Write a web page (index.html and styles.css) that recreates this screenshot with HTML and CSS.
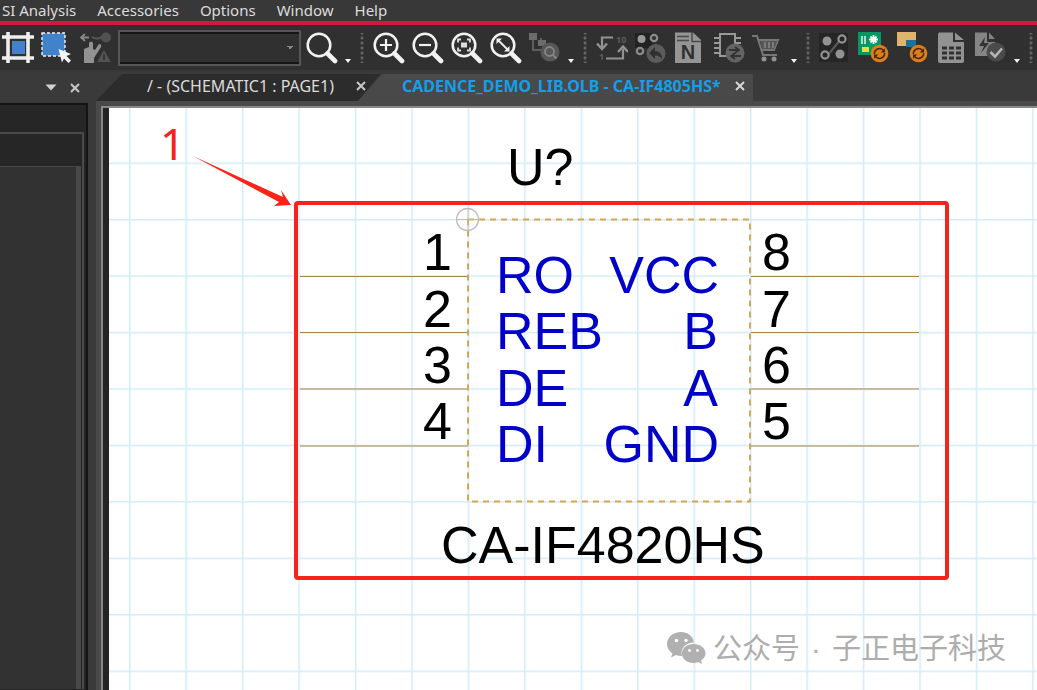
FILE: index.html
```html
<!DOCTYPE html>
<html lang="en">
<head>
<meta charset="utf-8">
<title>CADENCE_DEMO_LIB.OLB - CA-IF4805HS</title>
<link rel="stylesheet" href="styles.css">
</head>
<body>
<svg class="defs" width="0" height="0" aria-hidden="true">
  <defs>
    <symbol id="lens" viewBox="0 0 32 32">
      <circle cx="13" cy="13" r="11.3" fill="none" stroke="#f2f2f2" stroke-width="2.5"/>
      <path d="M21.5 21.5 L29 29" stroke="#f2f2f2" stroke-width="4.6" stroke-linecap="round"/>
    </symbol>
    <symbol id="refresh" viewBox="0 0 20 20">
      <circle cx="10" cy="10" r="9.3" fill="#dd7d1c"/>
      <path d="M4.6 10.5 A5.5 5.5 0 0 1 14 6.5 M15.4 9.5 A5.5 5.5 0 0 1 6 13.5" fill="none" stroke="#46280c" stroke-width="1.6"/>
      <path d="M15.8 4.5 V9 H11.3 Z M4.2 15.5 V11 H8.7 Z" fill="#46280c"/>
    </symbol>
  </defs>
</svg>
<div class="app">
  <nav class="menubar" aria-label="Main menu">
    <button class="menu">SI Analysis</button>
    <button class="menu">Accessories</button>
    <button class="menu">Options</button>
    <button class="menu">Window</button>
    <button class="menu">Help</button>
  </nav>

  <div class="toolbar" role="toolbar">
    <button class="tool" aria-label="Fit frame"><svg viewBox="0 0 32 32"><path d="M6 0 V31 M26 0 V31 M0 5 H32 M0 26 H32" stroke="#eeeeee" stroke-width="3.6"/><rect x="10" y="9" width="13" height="13" fill="#4182cb"/></svg></button>
    <button class="tool" aria-label="Select area"><svg viewBox="0 0 32 32"><rect x="1" y="1" width="23" height="23" fill="#4182cb" stroke="#f2f2f2" stroke-width="1.4" stroke-dasharray="3 2"/><path d="M17.500 17 L30 22 L25.500 24 L30 28.500 L27.500 31 L23 26.500 L21 30.500 Z" fill="#f5f5f5"/></svg></button>
    <button class="tool" aria-label="Gesture"><svg viewBox="0 0 32 32"><path d="M4 17 L9 15 V11 Q11 8 13 11 V17 L15 18 L19 12 Q22 12 21 15 L14 26 V31 H4 Z" fill="#929292"/><path d="M9 5.500 H2 M5 2 L1 5.500 L5 9" fill="none" stroke="#888888" stroke-width="1.800"/><path d="M12 5 Q17 8 22 5" fill="none" stroke="#5a5a5a" stroke-width="1.800"/><circle cx="26" cy="5.500" r="5" fill="#515151"/><path d="M24 18 L31 30 H17 Z" fill="#535353"/><path d="M24 22 V28" stroke="#333333" stroke-width="1.600"/></svg></button>
    <select class="combo" aria-label="Search text"><option></option></select>
    <button class="tool" aria-label="Find"><svg viewBox="0 0 32 32"><use href="#lens"/></svg></button>
    <button class="more" aria-label="More find options"></button>
    <span class="grip"></span>

    <button class="tool" aria-label="Zoom in"><svg viewBox="0 0 32 32"><use href="#lens"/><path d="M7 13 H19 M13 7 V19" stroke="#f2f2f2" stroke-width="2.200"/></svg></button>
    <button class="tool" aria-label="Zoom out"><svg viewBox="0 0 32 32"><use href="#lens"/><path d="M7 13 H19" stroke="#f2f2f2" stroke-width="2.200"/></svg></button>
    <button class="tool" aria-label="Zoom to selection"><svg viewBox="0 0 32 32"><use href="#lens"/><path d="M7 10.500 V7.500 H10 M16 7.500 H19 V10.500 M19 15.500 V18.500 H16 M10 18.500 H7 V15.500" fill="none" stroke="#dddddd" stroke-width="1.800"/><rect x="10" y="10.500" width="6" height="5" fill="#dddddd"/></svg></button>
    <button class="tool" aria-label="Zoom all"><svg viewBox="0 0 32 32"><use href="#lens"/><path d="M8 8 L18 18" stroke="#f2f2f2" stroke-width="1.800"/><path d="M6.500 6.500 H12 L6.500 12 Z M19.500 19.500 H14 L19.500 14 Z" fill="#f2f2f2"/></svg></button>
    <button class="tool" aria-label="Find in hierarchy"><svg viewBox="0 0 32 32"><path d="M0 1 H8 V8 H0 Z" fill="#6c6c6c"/><path d="M4 8 V18 H13 M12 11 V6" fill="none" stroke="#6c6c6c" stroke-width="1.500"/><rect x="9" y="8" width="8" height="6" fill="#6c6c6c"/><circle cx="21" cy="20" r="9.500" fill="#575757"/><circle cx="20.500" cy="19.500" r="4.500" fill="none" stroke="#858585" stroke-width="1.800"/><path d="M24 23 L27.500 26.500" stroke="#858585" stroke-width="2"/></svg></button>
    <button class="more" aria-label="More zoom options"></button>
    <span class="grip"></span>

    <button class="tool" aria-label="Renumber"><svg viewBox="0 0 32 32"><path d="M17 5.500 H6 V15 M10 26.500 H27 V17" fill="none" stroke="#929292" stroke-width="2.200"/><path d="M1 11.500 L6 17 L11 11.500 M22 20 L27 14.500 L32 20" fill="none" stroke="#929292" stroke-width="2.400"/><text x="20" y="11" class="tiny">10</text><text x="3" y="28" class="tiny">1</text></svg></button>
    <button class="tool" aria-label="Undo net"><svg viewBox="0 0 32 32"><rect x="0" y="1" width="17" height="15" fill="#222222"/><circle cx="6.500" cy="7" r="4" fill="#999999"/><g fill="none" stroke="#8b8b8b" stroke-width="2.200"><circle cx="19" cy="6" r="3.200"/><circle cx="5" cy="19" r="3.200"/></g><circle cx="21" cy="21.500" r="9.500" fill="#5c5c5c"/><path d="M14 21 L20 15 V19 Q27 19 27 27 Q24 23 20 23.500 V27 Z" fill="#303030"/></svg></button>
    <button class="tool" aria-label="Netlist"><svg viewBox="0 0 32 32"><path d="M1 0.500 H19 L27 8 V31 H1 Z" fill="#959595"/><path d="M18 0 V9.500 H27 M3 4.500 H15 M3 8.500 H15" fill="none" stroke="#4a4a4a" stroke-width="1.500"/><text x="14" y="27" text-anchor="middle" class="letter">N</text></svg></button>
    <button class="tool" aria-label="Swap part"><svg viewBox="0 0 32 32"><rect x="7" y="2" width="15" height="22" fill="none" stroke="#999999" stroke-width="2"/><path d="M1 6 H7 M1 11 H7 M1 16 H7 M1 21 H7 M22 6 H28 M22 11 H28" stroke="#999999" stroke-width="2"/><circle cx="22" cy="21" r="9.500" fill="#646464"/><path d="M16 18 H25 M22 15 L26 18 L22 21 M28 24 H19 M22 21 L18 24 L22 27" fill="none" stroke="#333333" stroke-width="1.800"/></svg></button>
    <button class="tool" aria-label="Order parts"><svg viewBox="0 0 32 32"><path d="M0 4 H5 L11 23 H25 M6 8 H26 L22 18 H9" fill="none" stroke="#777777" stroke-width="2"/><path d="M8 9 H25 L22 17 H10 Z" fill="#555555"/><path d="M13 10 V16 M17 10 V16 M21 10 V16" stroke="#888888" stroke-width="1.500"/><circle cx="12" cy="27" r="2.500" fill="#929292"/><circle cx="22" cy="27" r="2.500" fill="#929292"/></svg></button>
    <button class="more" aria-label="More part options"></button>
    <span class="grip"></span>

    <button class="tool" aria-label="Connect nodes"><svg viewBox="0 0 32 32"><rect x="0" y="1" width="29" height="29" fill="#252525"/><path d="M8 24 L22 7" stroke="#5a5a5a" stroke-width="2"/><circle cx="8" cy="9" r="4.500" fill="#929292"/><circle cx="21" cy="22" r="4.500" fill="#929292"/><g fill="#252525" stroke="#929292" stroke-width="2.200"><circle cx="23" cy="7" r="3.600"/><circle cx="6" cy="23" r="3.600"/></g></svg></button>
    <button class="tool" aria-label="Update board"><svg viewBox="0 0 32 32"><rect x="0" y="0" width="23" height="23" fill="#079765"/><path d="M4 4 V12 M7 4 V12" stroke="#e8f5ee" stroke-width="1.500"/><path d="M15.500 3 V12 M11 7.500 H20 M12.500 4.500 L18.500 10.500 M18.500 4.500 L12.500 10.500" stroke="#f5fff8" stroke-width="1.800"/><rect x="4" y="15" width="7" height="5" fill="#f4d83d"/><use href="#refresh" x="12" y="12" width="19" height="19"/></svg></button>
    <button class="tool" aria-label="Update schematic"><svg viewBox="0 0 32 32"><rect x="0" y="0" width="19" height="14" fill="#dfb56e"/><rect x="9" y="8" width="10" height="7" fill="#1b719c"/><use href="#refresh" x="12" y="12" width="19" height="19"/></svg></button>
    <button class="tool" aria-label="Bill of materials"><svg viewBox="0 0 32 32"><path d="M3 0.500 H17 V10 H28 V29 Q28 31 26 31 H4 Q2 31 2 29 V2 Z M19 0.500 L28 8 H19 Z" fill="#929292"/><path d="M6 16 H25 M6 21 H25 M6 26 H25" stroke="#303030" stroke-width="3" stroke-dasharray="5 2"/></svg></button>
    <button class="tool" aria-label="Design check"><svg viewBox="0 0 32 32"><path d="M0 0.500 H12 V10 H20 V24 H0 Z M14 0.500 L20 7 H14 Z" fill="#858585"/><path d="M10 5 L4 14 H9 L6 21 L14 11 H9 Z" fill="#333333"/><circle cx="21" cy="20" r="9.500" fill="#4b4b4b"/><path d="M15.500 20 L20 24.500 L27 16.500" fill="none" stroke="#b5b5b5" stroke-width="2.600"/></svg></button>
    <button class="more" aria-label="More reports"></button>
    <span class="grip"></span>
  </div>

  <div class="workspace">
    <aside class="panel">
      <header class="panel-head">
        <button class="panel-button" aria-label="Panel menu"><svg width="12" height="7" viewBox="0 0 12 7"><path d="M0.500 0.500 H11.500 L6 6.500 Z" fill="#d0d0d0"/></svg></button>
        <button class="panel-button" aria-label="Close panel"><svg width="10" height="10" viewBox="0 0 10 10"><path d="M1 1 L9 9 M9 1 L1 9" stroke="#c8c8c8" stroke-width="2"/></svg></button>
      </header>
      <div class="panel-body">
        <div class="panel-page">
          <div class="panel-list"></div>
        </div>
      </div>
    </aside>

    <main class="document">
      <div class="tabs">
        <div class="tab tab-page"><span class="tab-name">/ - (SCHEMATIC1 : PAGE1)</span><button class="tab-close" aria-label="Close page"><svg width="10" height="10" viewBox="0 0 10 10"><path d="M1 1 L9 9 M9 1 L1 9" stroke="#c8c8c8" stroke-width="2"/></svg></button></div>
        <div class="tab tab-library"><span class="tab-name">CADENCE_DEMO_LIB.OLB - CA-IF4805HS*</span><button class="tab-close" aria-label="Close library"><svg width="10" height="10" viewBox="0 0 10 10"><path d="M1 1 L9 9 M9 1 L1 9" stroke="#d8d8d8" stroke-width="2"/></svg></button></div>
      </div>
      <div class="frame">
        <svg class="canvas" role="img" aria-label="CA-IF4820HS symbol">
          <defs>
            <pattern id="grid" x="20" y="-2" width="56.45" height="56.45" patternUnits="userSpaceOnUse">
              <path d="M0.750 0 V57 M0 0.750 H57" stroke="#d2ebfa" stroke-width="1.500"/>
            </pattern>
          </defs>
          <rect width="100%" height="100%" fill="#ffffff"/>
          <rect width="100%" height="100%" fill="url(#grid)"/>
          <g transform="translate(-109 -108)">
            <path class="pin" d="M300 276.500 H468 M300 332.500 H468 M300 389 H468 M300 446 H468 M751 276.500 H919 M751 332.500 H919 M751 389 H919 M751 446 H919"/>
            <rect class="outline" x="468" y="219.500" width="282" height="282"/>
            <path d="M468 208 V231 M456 219.500 H480" stroke="#c4bcbc" stroke-width="1"/>
            <circle cx="467.500" cy="219.500" r="11" fill="none" stroke="#c4bcbc" stroke-width="1.300"/>
            <g class="part">
              <text x="507" y="185">U?</text>
              <text x="441" y="563">CA-IF4820HS</text>
            </g>
            <g class="part" text-anchor="end">
              <text x="452" y="270">1</text>
              <text x="452" y="327">2</text>
              <text x="452" y="383">3</text>
              <text x="452" y="439">4</text>
            </g>
            <g class="part">
              <text x="762" y="270">8</text>
              <text x="762" y="327">7</text>
              <text x="762" y="383">6</text>
              <text x="762" y="439">5</text>
            </g>
            <g class="part signal">
              <text x="496" y="293">RO</text>
              <text x="496" y="349">REB</text>
              <text x="496" y="406">DE</text>
              <text x="496" y="462">DI</text>
            </g>
            <g class="part signal" text-anchor="end">
              <text x="719" y="293">VCC</text>
              <text x="718" y="349">B</text>
              <text x="718" y="406">A</text>
              <text x="719" y="462">GND</text>
            </g>
            <rect x="296" y="203" width="651" height="375" rx="2" fill="none" stroke="#f5231a" stroke-width="4"/>
            <path d="M193 156 L283 197 L281 190 L291 205 L274 206 L279 202 Z" fill="#fa2318"/>
            <text x="160" y="160" class="callout">1</text>
            <g fill="#b0b0b0">
              <path d="M681 632 C673 632 667 637.500 667 644 C667 648 669 651 672.500 653.500 L671 657.500 L676 655 Q678 656 682 656 C680 648 686 642.500 694 642.500 C693 636 687.500 632 681 632 Z"/>
              <path d="M693.500 644 C687 644 682 648 682 653.500 C682 659 687 663 693.500 663 Q696 663 698 662 L702 664 L701 660.500 C704 658.500 705.500 656 705.500 653.500 C705.500 648 700 644 693.500 644 Z"/>
            </g>
            <g fill="#ffffff"><circle cx="676.500" cy="640.500" r="1.700"/><circle cx="686" cy="640.500" r="1.700"/><circle cx="689.500" cy="650.500" r="1.400"/><circle cx="697.500" cy="650.500" r="1.400"/></g>
            <g class="watermark">
              <text x="713" y="659">公众号</text>
              <text x="811" y="659">·</text>
              <text x="832" y="659">子正电子科技</text>
            </g>
          </g>
        </svg>
      </div>
    </main>
  </div>
</div>
</body>
</html>
```
FILE: styles.css
```css
* { box-sizing: border-box; }

body {
  margin: 0;
  background: #3a3a3a;
  color: #dcdcdc;
  font-family: "Noto Sans", "Open Sans", sans-serif;
}

button {
  margin: 0;
  padding: 0;
  border: 0;
  background: none;
  color: inherit;
  font: inherit;
}

.defs { position: absolute; }

.app {
  display: flex;
  flex-direction: column;
  height: 100vh;
  overflow: hidden;
}

.menubar {
  display: flex;
  flex: none;
  gap: 21px;
  height: 25px;
  padding-left: 2px;
  border-bottom: 4px solid #d5173b;
  background: #383838;
  font-size: 15px;
  line-height: 21px;
}

.menu { white-space: nowrap; }

.toolbar {
  display: flex;
  flex: none;
  align-items: center;
  height: 47px;
  border-bottom: 2px solid #383838;
  background: #303030;
  overflow: hidden;
}

.tool {
  display: flex;
  flex: none;
  width: 39px;
  padding-left: 2px;
}

.tool svg { width: 32px; height: 32px; }

.tiny { fill: #5c5c5c; font: bold 9px "Noto Sans", sans-serif; }

.letter { fill: #303030; font: bold 20px "Liberation Sans", Arial, sans-serif; }

.combo {
  flex: none;
  width: 183px;
  height: 36px;
  margin: 0 3px 0 1px;
  appearance: none;
  border: 2px solid #565656;
  border-radius: 0;
  background: conic-gradient(from -45deg at 50% 100%, #888888 90deg, transparent 0) no-repeat right 6px center / 6px 3px, #303030;
  box-shadow: inset 0 2px #151515, inset 0 -2px #151515;
}

.more {
  flex: none;
  align-self: flex-end;
  width: 10px;
  height: 4px;
  margin-bottom: 7px;
  background: #f2f2f2;
  clip-path: polygon(20% 0, 80% 0, 50% 100%);
}

.grip {
  flex: none;
  width: 18px;
  height: 30px;
  background: radial-gradient(circle, #686868 1px, transparent 2px) center / 18px 5px repeat-y;
}

.workspace {
  display: flex;
  flex: 1;
  min-height: 0;
}

.panel {
  display: flex;
  flex: none;
  flex-direction: column;
  width: 88px;
}

.panel-head {
  display: flex;
  flex: none;
  align-items: center;
  justify-content: flex-end;
  gap: 13px;
  height: 31px;
  padding-right: 8px;
}

.panel-button { display: flex; }

.panel-body {
  flex: 1;
  padding: 27px 2px 1px 0;
  border: solid #141414;
  border-width: 2px 2px 0 0;
  background: #262626;
}

.panel-page {
  height: 100%;
  padding-top: 32px;
  border: solid #4a4a4a;
  border-width: 2px 2px 0 0;
  background: #262626;
}

.panel-list {
  height: 100%;
  margin-right: 1px;
  border: solid #484848;
  border-width: 1px 5px 0 0;
  background: #323232;
}

.document {
  display: flex;
  flex: 1;
  flex-direction: column;
  min-width: 0;
  padding-left: 8px;
}

.tabs {
  display: flex;
  flex: none;
  height: 29px;
  padding-top: 2px;
  font-size: 16px;
  line-height: 24px;
}

.tab {
  display: flex;
  align-items: center;
  padding-bottom: 3px;
  white-space: nowrap;
}

.tab-page {
  width: 284px;
  padding-left: 51px;
  gap: 22px;
  background: #2c2c2c;
  clip-path: polygon(26px 0, 100% 0, 262px 100%, 0 100%);
}

.tab-library {
  width: 395px;
  margin-left: -22px;
  padding-right: 8px;
  padding-left: 44px;
  justify-content: space-between;
  background: #494949;
  clip-path: polygon(24px 0, 100% 0, 100% 100%, 0 100%);
  color: #169ee8;
  font-weight: bold;
}

.tab-close { display: flex; }

.frame {
  flex: 1;
  min-height: 0;
  padding: 5px 0 0 5px;
  background: #4a4a4a;
}

.canvas {
  display: block;
  width: 100%;
  height: 100%;
  border: solid #888888;
  border-width: 2px 0 0 2px;
  padding-left: 6px;
  background: #242424;
}

.pin { fill: none; stroke: #a98446; stroke-width: 1; }

.outline {
  fill: none;
  stroke: #d7a650;
  stroke-width: 2;
  stroke-dasharray: 6 5;
}

.part { font: 52px "Liberation Sans", Arial, sans-serif; fill: #000000; }

.signal { fill: #0000c8; }

.callout { font: 44px "Noto Sans", sans-serif; fill: #f5231a; }

.watermark {
  font: 29px "Liberation Sans", "Noto Sans CJK SC", sans-serif;
  fill: #adadad;
}
```
